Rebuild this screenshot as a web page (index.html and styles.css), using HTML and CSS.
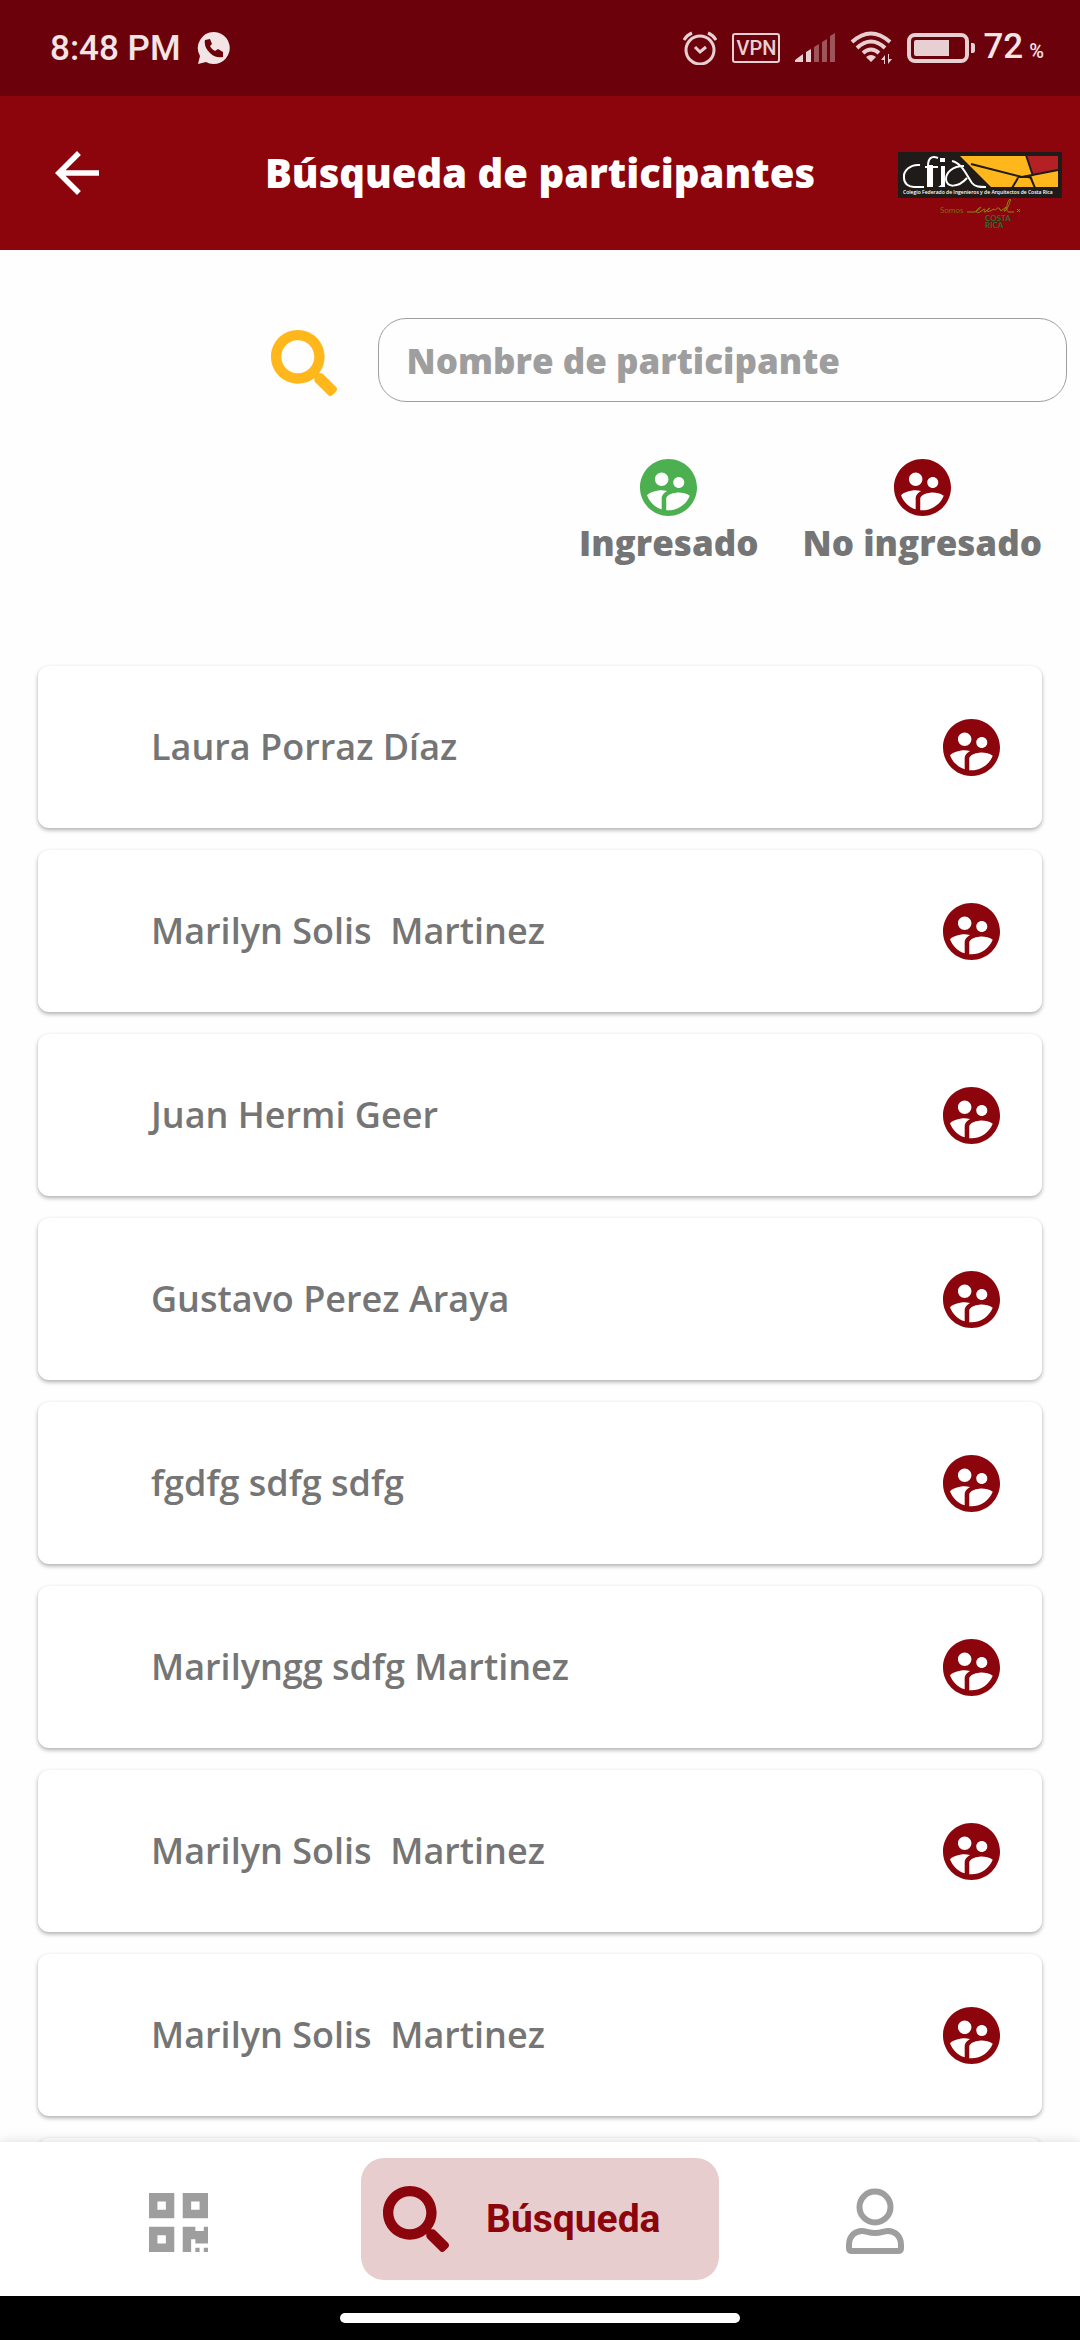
FILE: index.html
```html
<!DOCTYPE html>
<html lang="es">
<head>
<meta charset="utf-8">
<meta name="viewport" content="width=device-width, initial-scale=1">
<title>Búsqueda de participantes</title>
<link rel="stylesheet" href="styles.css">
</head>
<body>
<svg class="sprite" aria-hidden="true">
  <symbol id="people" viewBox="2 2 20 20">
    <path fill-rule="evenodd" d="M12 2C6.480 2 2 6.480 2 12s4.480 10 10 10 10-4.480 10-10S17.520 2 12 2zm3.610 6.340c1.070 0 1.930.860 1.930 1.930s-.860 1.930-1.930 1.930-1.930-.860-1.930-1.930c-.010-1.070.860-1.930 1.930-1.930zm-6-1.580c1.300 0 2.360 1.060 2.360 2.360s-1.060 2.360-2.360 2.360-2.360-1.060-2.360-2.360c0-1.310 1.050-2.360 2.360-2.360zm0 9.130v3.750c-2.400-.750-4.300-2.600-5.140-4.960 1.050-1.120 3.670-1.690 5.140-1.690.530 0 1.200.080 1.900.220-1.640.870-1.900 2.020-1.900 2.680zM12 20c-.270 0-.530-.010-.790-.040v-4.070c0-1.420 2.940-2.130 4.400-2.130 1.070 0 2.920.390 3.840 1.150C18.280 17.880 15.390 20 12 20z"/>
  </symbol>
  <symbol id="search" viewBox="0 0 512 512">
    <path d="M505 442.700 405.300 343c-4.500-4.500-10.600-7-17-7H372c27.600-35.300 44-79.700 44-128C416 93.100 322.900 0 208 0S0 93.100 0 208s93.100 208 208 208c48.300 0 92.700-16.400 128-44v16.300c0 6.400 2.500 12.500 7 17l99.700 99.700c9.400 9.400 24.600 9.400 33.900 0l28.300-28.300c9.400-9.400 9.400-24.600.100-34zM208 336c-70.700 0-128-57.200-128-128 0-70.700 57.200-128 128-128 70.700 0 128 57.200 128 128 0 70.700-57.200 128-128 128z"/>
  </symbol>
</svg>

<div class="status-bar">
  <span class="clock">8:48 PM</span>
  <svg class="chat" viewBox="0 0 34 34" aria-hidden="true">
    <path fill-rule="evenodd" d="M17 1a16 16 0 1 1-8 30L1 33l2-8A16 16 0 0 1 17 1zM8 9c-1 5 1 9 5 13s8 5 13 4v-5l-5-3-3 2c-2-1-4-3-5-5l2-2-2-5z"/>
  </svg>
  <div class="status-icons">
    <svg class="alarm" viewBox="0 0 34 34" aria-hidden="true">
      <circle cx="17" cy="19" r="14"/><path d="M12 16l5 5 6-5M1 9q3-5 8-7M33 9q-3-5-8-7"/>
    </svg>
    <span class="vpn">VPN</span>
    <svg class="signal" viewBox="0 0 40 30" aria-hidden="true">
      <path d="M0 29v-2l8-6v8zM11 29V19l5-3v13z"/><path class="dim" d="M19 29V14l5-3v18zM27 29V9l5-3v23zM35 29V3l5-3v29z"/>
    </svg>
    <svg class="wifi" viewBox="0 0 42 34" aria-hidden="true">
      <path class="arc" d="M2 11Q21-6 40 11M7 17Q21 4 35 17M13 22q8-7 16 0"/><path d="M16 26q5-4 10 0l-5 5zM35 33V24l-4 5h3v4zM38 23v10l4-5h-3v-5z"/>
    </svg>
    <svg class="battery" viewBox="0 0 68 30" aria-hidden="true">
      <rect class="shell" x="2" y="2" width="58" height="26" rx="6"/><path d="M9 7h33v16H9q-2 0-2-2V9q0-2 2-2zM64 10h2q2 0 2 3v4q0 3-2 3h-2z"/>
    </svg>
    <span class="level">72<small>%</small></span>
  </div>
</div>

<header class="app-bar">
  <button class="back" type="button" aria-label="Volver">
    <svg viewBox="4 4 16 16" aria-hidden="true"><path d="M20 11H7.830l5.590-5.590L12 4l-8 8 8 8 1.410-1.410L7.830 13H20v-2z"/></svg>
  </button>
  <h1>Búsqueda de participantes</h1>
  <svg class="logo" viewBox="0 0 164 78" role="img" aria-label="CFIA, Colegio Federado de Ingenieros y de Arquitectos de Costa Rica">
    <rect width="164" height="46" fill="#1f1b18"/>
    <path d="M62 4h98v31H93z" fill="#ffb71b"/>
    <path d="M129 4h31v14l-25 5z" fill="#b52025"/>
    <g fill="none" stroke="#1f1b18" stroke-width="2">
      <path d="M73 12l51 13 36-7M128 3l7 21M114 36l6-10M137 36l-5-12"/>
    </g>
    <path d="M118 26q6-3 13-2l4 3q-8-2-17-1z" fill="#1f1b18"/>
    <g fill="none" stroke="#fff" stroke-width="2">
      <path d="M22 13C12 12 5 19 6 26c0 6 5 9 10 9h10M40 6c-7-3-10 1-10 8v21M27 15h13M44 15v20M66 14c-12 0-18 7-18 13 0 9 12 9 21-1M54 9c10 2 15 15 20 22 3 4 8 4 14 4"/>
    </g>
    <path d="M31 13h4v22h-6l2-2zM43 14h4v21h-7l3-2zM42 6h5v4h-5z" fill="#fff"/>
    <text class="logo-name" x="5" y="42">Colegio Federado de Ingenieros y de Arquitectos de Costa Rica</text>
    <text class="logo-somos" x="42" y="61">Somos</text>
    <path d="M69 60h8c5-3 8-6 4-4-4 3-3 6 1 4l4-3c3 0-2 4 1 3l5-4c-4 2-4 5 0 3l4-2c1 3 3-2 5-1l2 3 5-4-2 4c2 2 8-12 6-12-3 2-5 13-1 13h5M119 57l3 3M122 57l-3 3" fill="none" stroke="#8b8a10"/>
    <text class="logo-country" x="87" y="69">COSTA</text>
    <text class="logo-country" x="87" y="76">RICA</text>
  </svg>
</header>

<main>
  <form class="search">
    <label for="name" aria-label="Buscar"><svg viewBox="0 0 512 512" aria-hidden="true"><use href="#search"/></svg></label>
    <input id="name" type="text" placeholder="Nombre de participante">
  </form>
  <div class="legend">
    <div class="status in"><svg class="people" aria-hidden="true"><use href="#people"/></svg>Ingresado</div>
    <div class="status"><svg class="people" aria-hidden="true"><use href="#people"/></svg>No ingresado</div>
  </div>
  <ul class="list">
    <li>Laura Porraz Díaz<svg class="people" aria-hidden="true"><use href="#people"/></svg></li>
    <li>Marilyn Solis  Martinez<svg class="people" aria-hidden="true"><use href="#people"/></svg></li>
    <li>Juan Hermi Geer<svg class="people" aria-hidden="true"><use href="#people"/></svg></li>
    <li>Gustavo Perez Araya<svg class="people" aria-hidden="true"><use href="#people"/></svg></li>
    <li>fgdfg sdfg sdfg<svg class="people" aria-hidden="true"><use href="#people"/></svg></li>
    <li>Marilyngg sdfg Martinez<svg class="people" aria-hidden="true"><use href="#people"/></svg></li>
    <li>Marilyn Solis  Martinez<svg class="people" aria-hidden="true"><use href="#people"/></svg></li>
    <li>Marilyn Solis  Martinez<svg class="people" aria-hidden="true"><use href="#people"/></svg></li>
    <li></li>
  </ul>
</main>

<nav class="tabs" aria-label="Principal">
  <button type="button" aria-label="Código QR">
    <svg class="qr" viewBox="0 0 448 448" aria-hidden="true"><path fill-rule="evenodd" d="M0 192h192V0H0v192zM64 64h64v64H64V64zM256 0v192h192V0H256zm128 128h-64V64h64v64zM0 448h192V256H0v192zm64-128h64v64H64v-64zM416 256h32v128h-96v-32h-32v96h-64V256h96v32h64v-32zm0 160h32v32h-32v-32zm-64 0h32v32h-32v-32z"/></svg>
  </button>
  <button class="active" type="button" aria-current="page">
    <svg class="find" viewBox="0 0 512 512" aria-hidden="true"><use href="#search"/></svg>
    <span>Búsqueda</span>
  </button>
  <button class="profile" type="button" aria-label="Perfil">
    <svg class="user" viewBox="0 0 58 66" aria-hidden="true"><circle cx="29" cy="19" r="15.500"/><path d="M6 63h46q3 0 3-3v-3c0-9-6-14-13-14-4 0-7 2-13 2s-9-2-13-2C9 43 3 48 3 57v3q0 3 3 3z"/></svg>
  </button>
</nav>
<div class="gesture-bar"><span></span></div>
</body>
</html>
```
FILE: styles.css
```css
* {
  box-sizing: border-box;
}

html,
body {
  height: 100%;
}

body {
  margin: 0;
  display: flex;
  flex-direction: column;
  background: #fefefe;
  color: #757575;
  font: 600 36px/44px "Open Sans", sans-serif;
}

button {
  padding: 0;
  border: 0;
  background: none;
  font: inherit;
  color: inherit;
}

svg {
  display: block;
  flex: none;
  fill: currentColor;
}

.sprite {
  position: absolute;
  width: 0;
  height: 0;
}

/* Device status bar */
.status-bar {
  flex: none;
  display: flex;
  align-items: center;
  height: 96px;
  padding: 0 36px 0 50px;
  background: #6b020b;
  color: #f3e4e6;
  font: 500 35px/40px Roboto, sans-serif;
}

.clock,
.level {
  padding-top: 2px;
}

.chat {
  width: 34px;
  height: 34px;
  margin-left: 16px;
}

.status-icons {
  display: flex;
  align-items: center;
  gap: 15px;
  margin-left: auto;
  color: #e8d0d2;
}

.alarm {
  width: 34px;
  height: 34px;
  fill: none;
  stroke: currentColor;
  stroke-width: 3;
}

.vpn {
  width: 48px;
  height: 30px;
  border: 2px solid;
  border-radius: 3px;
  font-size: 20px;
  line-height: 27px;
  text-align: center;
}

.signal {
  width: 40px;
  height: 30px;
}

.dim {
  opacity: 0.4;
}

.wifi {
  width: 42px;
  height: 34px;
}

.arc,
.shell {
  fill: none;
  stroke: currentColor;
  stroke-width: 4;
}

.battery {
  width: 68px;
  height: 30px;
}

.level {
  margin-left: -7px;
  color: #f3e4e6;
}

.level small {
  margin-left: 6px;
  font-size: 20px;
}

/* App bar */
.app-bar {
  flex: none;
  display: flex;
  align-items: center;
  height: 154px;
  padding: 0 18px;
  background: #8c040c;
  color: #fff;
}

.back {
  width: 164px;
  padding-left: 37px;
}

.back svg {
  width: 44px;
  height: 44px;
}

.app-bar h1 {
  flex: 1;
  margin: 0;
  font-size: 40px;
  font-weight: 800;
  text-align: center;
}

.logo {
  width: 164px;
  height: 78px;
  margin-top: 36px;
}

.logo-name {
  fill: #fff;
  font: 600 5px "Open Sans", sans-serif;
}

.logo-somos {
  fill: #7b6b14;
  font: 400 8px Lato, sans-serif;
}

.logo-country {
  fill: #27702f;
  font: 700 8px Lato, sans-serif;
}

/* Search and list */
main {
  flex: 1;
  min-height: 0;
  padding: 68px 38px 0;
  overflow: hidden;
}

.search {
  display: flex;
  align-items: center;
  justify-content: flex-end;
  gap: 41px;
  margin-right: -25px;
}

.search svg {
  width: 66px;
  height: 66px;
  margin-top: 6px;
  color: #ffb71b;
}

.search input {
  width: 67%;
  height: 84px;
  padding: 0 28px;
  border: 1px solid #9e9e9e;
  border-radius: 28px;
  background: none;
  font: 800 35px/44px "Open Sans", sans-serif;
  color: #757575;
}

.search input::placeholder {
  color: #9e9e9e;
  opacity: 1;
}

.people {
  width: 57px;
  height: 57px;
  color: #8c040c;
}

.legend {
  display: flex;
  justify-content: flex-end;
  gap: 44px;
  margin-top: 57px;
  font-size: 35px;
  font-weight: 800;
}

.status {
  display: flex;
  flex-direction: column;
  align-items: center;
  gap: 5px;
}

.in .people {
  color: #4caf50;
}

.list {
  display: grid;
  gap: 22px;
  margin: 101px 0 0;
  padding: 0;
  list-style: none;
}

.list li {
  display: flex;
  align-items: center;
  justify-content: space-between;
  min-height: 162px;
  padding: 0 42px 0 113px;
  border-radius: 11px;
  background: #fff;
  box-shadow: 0 2px 4px rgb(0 0 0 / 32%);
  white-space: pre;
}

/* Bottom navigation */
.tabs {
  flex: none;
  position: relative;
  display: flex;
  align-items: center;
  height: 154px;
  padding: 0 176px 0 149px;
  background: #fff;
  box-shadow: 0 0 12px rgb(0 0 0 / 14%);
  color: #9e9e9e;
}

.qr {
  width: 59px;
  height: 59px;
  margin-top: 6px;
}

.active {
  display: flex;
  align-items: center;
  gap: 37px;
  height: 122px;
  margin-left: 153px;
  padding: 0 58px 0 22px;
  border-radius: 23px;
  background: #e8cdce;
  color: #8c040c;
  font: 700 39px/46px Roboto, sans-serif;
}

.profile {
  margin-left: auto;
}

.find {
  width: 66px;
  height: 66px;
}

.user {
  width: 58px;
  height: 66px;
  margin-top: 3px;
  fill: none;
  stroke: currentColor;
  stroke-width: 6;
}

.gesture-bar {
  flex: none;
  display: flex;
  align-items: center;
  justify-content: center;
  height: 44px;
  background: #000;
}

.gesture-bar span {
  width: 37%;
  height: 10px;
  border-radius: 5px;
  background: #fff;
}
```
